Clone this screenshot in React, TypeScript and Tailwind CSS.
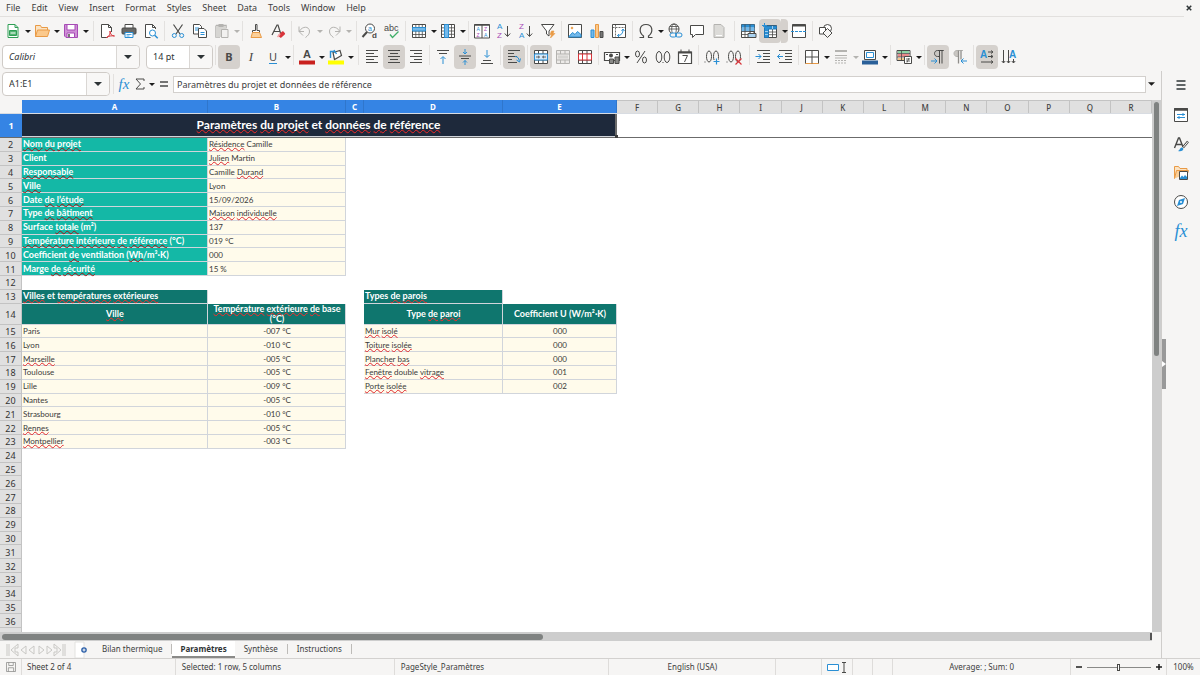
import type { ReactNode } from "react";
import clsx from "clsx";

const INK = "#4a4a48";
const BLUE = "#2a8fd4";
const GREY = "#b4b3b0";
const ORANGE = "#e99a45";
const PURPLE = "#a74bb5";
const RED = "#d8353b";
const GREEN = "#2f9e55";

const letters = (size: number) => ({ fontFamily: "Liberation Sans", fontSize: size, stroke: "none" });

const icons: Record<string, ReactNode> = {
  newSheet: (
    <>
      <path d="M3 1.5h7l3 3v10H3z" fill="#fff" stroke={GREEN} />
      <path d="M10 1.5v3h3" stroke={GREEN} />
      <path d="M4.5 7.5h7v5h-7z" fill="#56b574" stroke={GREEN} />
      <path d="M5.5 10h5" stroke="#fff" />
    </>
  ),
  open: (
    <>
      <path d="M1.5 13.5v-11h5l1 2h6v3" fill="#fbe3c3" stroke={ORANGE} />
      <path d="M1.5 13.5l2-6.5h12l-2 6.5z" fill="#fbc98c" stroke={ORANGE} />
    </>
  ),
  save: (
    <>
      <path d="M1.5 1.5h13v13h-11.5l-1.5-1.5z" fill="#cf8fd6" stroke={PURPLE} />
      <path d="M4 1.5h8v5.5h-8z" fill="#fff" stroke={PURPLE} />
      <path d="M4 10h7.5v4.5h-7.5z" fill="#fff" stroke={PURPLE} />
      <path d="M6 11v3" stroke={INK} strokeWidth="1.5" />
    </>
  ),
  pdf: (
    <>
      <path d="M12.5 9v-4.5l-3-3h-7v13h6" fill="#fff" stroke={INK} />
      <path d="M9.5 1.5v3h3" stroke={INK} />
      <path d="M7.5 14.5c3-1 4-4 3.5-6.5c0 3 2 5 4.5 5c-3-.5-6 0-8 1.5z" stroke={RED} />
    </>
  ),
  print: (
    <>
      <path d="M4 5v-3.5h8v3.5" fill="#fff" stroke={INK} />
      <rect x="1" y="5" width="14" height="6" rx="1" fill="#686866" stroke={INK} />
      <path d="M4 9.5h8v5h-8z" fill="#fff" stroke={BLUE} />
      <path d="M5.5 11.5h5M5.5 13h3" stroke={BLUE} strokeWidth=".8" />
    </>
  ),
  preview: (
    <>
      <path d="M12.5 6v-1.5l-3-3h-7v13h5" fill="#fff" stroke={INK} />
      <path d="M9.5 1.5v3h3" stroke={INK} />
      <circle cx="9.5" cy="10" r="3" fill="#fff" stroke={BLUE} />
      <path d="M11.7 12.2l3 3" stroke={BLUE} strokeWidth="1.5" />
    </>
  ),
  cut: (
    <>
      <path d="M3.5 1.5l6.5 9.5M12.5 1.5l-6.5 9.5" stroke={INK} strokeWidth="1.2" />
      <circle cx="4.3" cy="12.5" r="2" stroke={BLUE} />
      <circle cx="11.7" cy="12.5" r="2" stroke={BLUE} />
    </>
  ),
  copy: (
    <>
      <path d="M1.5 1.5h6l2 2v7.5h-8z" fill="#fff" stroke={INK} />
      <path d="M3 5h4M3 7h3" stroke={BLUE} />
      <path d="M6.5 5.5h5.5l2.5 2.5v6.5h-8z" fill="#fff" stroke={INK} />
      <path d="M8.5 9.5h4M8.5 11.5h4" stroke={BLUE} />
    </>
  ),
  paste: (
    <>
      <path d="M2 2.5h10v3M2 2.5v11.5h4" fill="none" stroke={GREY} strokeWidth="1.5" />
      <path d="M2 3h10v11h-10z" fill="#d6d5d2" />
      <path d="M4.5 1h5v3h-5z" fill={GREY} />
      <path d="M7.5 6.5h6.5v8h-6.5z" fill="#f2f1f0" stroke={GREY} />
    </>
  ),
  clone: (
    <>
      <path d="M7.5 1.5h1.5v6h2.5v2h-7v-2h3z" fill="#fff" stroke={INK} />
      <path d="M4.5 9.5l-1.5 5h10.5l-2-5z" fill="#fbd09a" stroke={ORANGE} />
    </>
  ),
  clearFormat: (
    <>
      <path d="M2 12l5-10h1l2.5 8M4 8.5h5.5" stroke={INK} strokeWidth="1.2" />
      <rect x="8.5" y="9.5" width="6.5" height="4" rx="1" transform="rotate(-42 11.7 11.5)" fill={RED} />
      <path d="M7.5 14l2.5-3" stroke="#f3a3a6" strokeWidth="1.5" />
    </>
  ),
  undo: <path d="M2 8.5l4 4M2 8.5h5M2 8.5v-5M2.5 8c3-5 9.5-5 10 0c.3 3-2 5-4 6.5" stroke={GREY} />,
  redo: <path d="M14 8.5l-4 4M14 8.5h-5M14 8.5v-5M13.5 8c-3-5-9.5-5-10 0c-.3 3 2 5 4 6.5" stroke={GREY} />,
  find: (
    <>
      <circle cx="8" cy="5.5" r="4.5" fill="#fff" stroke={INK} />
      <path d="M5 9l-4.5 5" stroke={INK} strokeWidth="2" />
      <text x="6" y="8" fill={BLUE} {...letters(7)}>a</text>
      <text x="10" y="15" fill={INK} fontWeight="600" {...letters(8)}>d</text>
    </>
  ),
  spell: (
    <>
      <text x="0" y="8" fill={INK} {...letters(9)}>abc</text>
      <path d="M6 11.5l2.5 3l6-6" stroke="#3fae68" strokeWidth="1.3" />
    </>
  ),
  rows: (
    <>
      <path d="M1.5 1.5h13v13h-13z" fill="#fff" stroke={INK} />
      <path d="M1.5 4.5h13M1.5 11.5h13M4.8 1.5v13M8 1.5v13M11.3 1.5v13M1.5 8h13" stroke={INK} strokeWidth=".8" />
      <path d="M1.5 4.5h13v3.5h-13z" fill="#74b9ea" stroke={BLUE} />
    </>
  ),
  columns: (
    <>
      <path d="M1.5 1.5h13v13h-13z" fill="#fff" stroke={INK} />
      <path d="M1.5 4.8h13M1.5 8h13M1.5 11.3h13M11.5 1.5v13" stroke={INK} strokeWidth=".8" />
      <path d="M4.5 1.5h4v13h-4z" fill="#74b9ea" stroke={BLUE} />
    </>
  ),
  sort: (
    <>
      <path d="M.5 1.5h15v13.5h-15zM8 1.5v13.5" fill="#fff" stroke={INK} />
      <path d="M.5 2h15" stroke={INK} strokeWidth="1.5" />
      <text x="2.5" y="8" fill={BLUE} {...letters(5)}>A</text>
      <text x="2.5" y="14" fill={PURPLE} {...letters(5)}>Z</text>
      <text x="10" y="8" fill={PURPLE} {...letters(5)}>Z</text>
      <text x="10" y="14" fill={BLUE} {...letters(5)}>A</text>
    </>
  ),
  sortAsc: (
    <>
      <text x="1" y="6" fill={BLUE} {...letters(8)}>A</text>
      <text x="1" y="15" fill={PURPLE} {...letters(8)}>Z</text>
      <path d="M11.5 3v10M8.8 10.5l2.7 3l2.7-3" stroke={INK} />
    </>
  ),
  sortDesc: (
    <>
      <text x="1" y="6" fill={PURPLE} {...letters(8)}>Z</text>
      <text x="1" y="15" fill={BLUE} {...letters(8)}>A</text>
      <path d="M11.5 3v10M8.8 10.5l2.7 3l2.7-3" stroke={INK} />
    </>
  ),
  filter: (
    <>
      <path d="M1.5 1.5h12.5l-5 6.5v5l-2.5-2v-3z" fill="#fff" stroke={INK} />
      <path d="M11.5 8h2.5l-1 2.5h2l-4.5 4.5l1-3.5h-1.5z" fill={ORANGE} stroke={ORANGE} strokeWidth=".6" />
    </>
  ),
  image: (
    <>
      <path d="M1.5 1.5h13v13h-13z" fill="#fff" stroke={INK} />
      <path d="M2 13.5l3.5-4l2.5 2l2.5-3l3.5 3v2.5h-12z" fill="#74b9ea" stroke={BLUE} />
      <path d="M5 3.5l1.5 1.5l-1.5 1.5l-1.5-1.5z" fill={ORANGE} />
    </>
  ),
  chart: (
    <>
      <path d="M2 7h3v7.5h-3z" fill="#74b9ea" stroke={BLUE} />
      <path d="M6.5 1.5h3v13h-3z" fill="#fbc98c" stroke={ORANGE} />
      <path d="M11 8.5h3v6h-3z" fill="#777" stroke={INK} />
    </>
  ),
  pivot: (
    <>
      <path d="M1.5 1.5h13v13h-13z" fill="#fff" stroke={INK} />
      <path d="M1.5 4.5h13M4.5 1.5v13" stroke={INK} strokeWidth=".8" strokeDasharray="2 1" />
      <path d="M6.5 12.5c4 0 5.5-2.5 5.5-6M10.5 8l1.5-2l1.5 2M8 11l-1.5 1.5l1.5 1.5" stroke={BLUE} />
    </>
  ),
  omega: (
    <path d="M1.5 14.5h4v-1.5c-5-3.5-4.5-11.5 2.5-11.5s7.5 8 2.5 11.5v1.5h4" stroke={INK} strokeWidth="1.2" />
  ),
  hyperlink: (
    <>
      <circle cx="7" cy="6" r="5" fill="#fff" stroke={INK} />
      <ellipse cx="7" cy="6" rx="2.3" ry="5" stroke={INK} strokeWidth=".8" />
      <path d="M2 6h10M3 3.5h8" stroke={INK} strokeWidth=".8" />
      <rect x="3" y="10" width="6.5" height="4" rx="2" fill="#f6f5f4" stroke={BLUE} />
      <rect x="8.5" y="10" width="6.5" height="4" rx="2" stroke={BLUE} />
    </>
  ),
  comment: <path d="M1.5 2.5h13v9h-8l-3 3v-3h-2z" fill="#fff" stroke={INK} />,
  headerFooter: (
    <>
      <path d="M3 1.5h7l3 3v10h-10z" fill="#dcdbd8" stroke={GREY} />
      <path d="M5 12.5h6" stroke="#fff" />
    </>
  ),
  printArea: (
    <>
      <path d="M1.5 1.5h13v13h-13z" fill="#fff" stroke={INK} />
      <path d="M1.5 4.5h13v4h-13z" fill="#74b9ea" />
      <path d="M1.5 1.5h13v3h-13z" fill="#2a8fd4" />
      <path d="M1.5 8.5h13M1.5 11.5h7M5 1.5v13M10 1.5v8" stroke={INK} strokeWidth=".8" />
      <path d="M8 10.5h8v4h-8z" fill="#a9d2f0" stroke={INK} />
      <path d="M10 10v-1.5h4v1.5" stroke={INK} />
    </>
  ),
  freeze: (
    <>
      <path d="M2.5 2.5h12v12h-12z" fill="#fff" stroke={INK} />
      <path d="M10.5 6v8.5M6 9h8.5M6 11.7h8.5" stroke={INK} strokeWidth=".8" />
      <path d="M1 3h13.5v3h-8v8.5h-4v-10" fill={BLUE} stroke="#1f76b5" />
      <path d="M0 2.5h5M2.5 0v5" stroke={BLUE} />
      <path d="M3 8.5h3M3 11.5h3M10.5 3v3" stroke="#bfe0f7" strokeWidth=".8" />
    </>
  ),
  split: (
    <>
      <path d="M1.5 1.5h13v13h-13z" fill="#fff" stroke={INK} />
      <path d="M1.5 2.5h13" stroke={INK} strokeWidth="2" />
      <path d="M0 8.5h16" stroke={BLUE} strokeWidth="1.2" strokeDasharray="3 1" />
    </>
  ),
  shapes: (
    <>
      <circle cx="9.5" cy="5.5" r="4" fill="#fff" stroke={INK} />
      <path d="M1.5 4.5h6v6.5h-6z" fill="#fff" stroke={INK} />
      <path d="M9.5 5.5l4.5 4.5l-4.5 4.5l-4.5-4.5z" fill="#f6f5f4" stroke={INK} />
    </>
  ),
  fontColor: (
    <>
      <text x="4" y="9" fill={INK} fontWeight="600" {...letters(11)}>A</text>
      <path d="M0 11.5h16v4h-16z" fill="#c9211e" />
    </>
  ),
  highlight: (
    <>
      <path d="M5 3.5l7-2l1.5 5l-7 4z" fill="#fff" stroke={INK} strokeWidth="1.2" />
      <path d="M2.5 9v-6.5h4M6 1l2.5 4" stroke={BLUE} strokeWidth="1.4" />
      <path d="M0 11.5h16v4h-16z" fill="#ffff00" />
    </>
  ),
  alignLeft: <path d="M2 1.5h12M2 4.5h8M2 7.5h12M2 10.5h8M2 13.5h12" stroke={INK} />,
  alignCenter: <path d="M2 1.5h12M4 4.5h8M2 7.5h12M4 10.5h8M2 13.5h12" stroke={INK} />,
  alignRight: <path d="M2 1.5h12M6 4.5h8M2 7.5h12M6 10.5h8M2 13.5h12" stroke={INK} />,
  top: (
    <>
      <path d="M2 1.5h12M4 4.5h8" stroke={INK} />
      <path d="M8 15v-7M5.5 10l2.5-2.5l2.5 2.5" stroke={BLUE} />
    </>
  ),
  middle: (
    <>
      <path d="M2 7h12M4 9.5h8" stroke={INK} />
      <path d="M8 0v5M6 3l2 2l2-2M8 16v-4.5M6 13.5l2-2l2 2" stroke={BLUE} />
    </>
  ),
  bottom: (
    <>
      <path d="M4 11.5h8M2 14.5h12" stroke={INK} />
      <path d="M8 1v7M5.5 6l2.5 2.5l2.5-2.5" stroke={BLUE} />
    </>
  ),
  wrap: (
    <>
      <path d="M2 1.5h12M2 4.5h6M2 7.5h9M2 10.5h4M2 13.5h9" stroke={INK} />
      <path d="M9 7.5c3 0 4 2 4 4M10.5 11l3 2l1-3.5" stroke={BLUE} />
    </>
  ),
  merge: (
    <>
      <path d="M1.5 1.5h13v13h-13z" fill="#fff" stroke={INK} />
      <path d="M1.5 5h13M1.5 11h13M5.5 1.5v3.5M10 1.5v3.5M5.5 11v3.5M10 11v3.5" stroke={INK} />
      <path d="M1.5 5h13v6h-13z" fill="#d6eafa" stroke={BLUE} />
      <path d="M3 8h3.5M9.5 8h3.5M5 6.8l1.5 1.2l-1.5 1.2M11 6.8l-1.5 1.2l1.5 1.2" stroke={INK} strokeWidth=".8" />
    </>
  ),
  mergeCells: (
    <>
      <path d="M1.5 1.5h13v13h-13z" fill="#eceae8" stroke={GREY} />
      <path d="M1.5 5h13M1.5 11h13M5.5 1.5v3.5M10 1.5v3.5M5.5 11v3.5M10 11v3.5" stroke={GREY} />
      <path d="M3 6.5h10v3h-10z" fill="#d6d5d2" />
    </>
  ),
  unmerge: (
    <>
      <path d="M1.5 1.5h13v13h-13z" fill="#fff" stroke={INK} />
      <path d="M1.5 5h13M1.5 11h13M5.5 1.5v3.5M10 1.5v3.5M5.5 11v3.5M10 11v3.5" stroke={INK} />
      <path d="M1.5 5h13v6h-13zM5.5 5v6M10 5v6" fill="#fff" stroke={RED} />
    </>
  ),
  currency: (
    <>
      <path d="M.5 3.5h15v8h-15z" fill="#fff" stroke={INK} strokeWidth="1.2" />
      <circle cx="7" cy="6.5" r="2" fill={INK} />
      <path d="M2 5.5h2M12 5.5h2" stroke={INK} />
      <path d="M5.5 10h4v4.5h-4zM11 8h4v6.5h-4z" fill="#8a8a88" stroke={INK} />
    </>
  ),
  percent: (
    <>
      <ellipse cx="4.5" cy="5" rx="2" ry="3" stroke={INK} />
      <ellipse cx="11.5" cy="11" rx="2" ry="3" stroke={INK} />
      <path d="M12 2l-8 12" stroke={INK} />
    </>
  ),
  number: (
    <>
      <ellipse cx="4" cy="8" rx="2.8" ry="5.5" stroke={INK} />
      <ellipse cx="12" cy="8" rx="2.8" ry="5.5" stroke={INK} />
      <path d="M7.5 13.5h1" stroke={INK} />
    </>
  ),
  date: (
    <>
      <path d="M1.5 3h13v11.5h-13z" fill="#fff" stroke={INK} strokeWidth="1.2" />
      <path d="M1.5 3.5h13" stroke={INK} strokeWidth="2" />
      <path d="M4 .5v3M12 .5v3M5.5 6.5h5l-3 6.5" stroke={INK} />
    </>
  ),
  addDecimal: (
    <>
      <path d="M.5 13h1" stroke={INK} />
      <ellipse cx="5" cy="7.5" rx="2.5" ry="5.5" stroke={INK} />
      <ellipse cx="12" cy="7.5" rx="2.5" ry="5.5" stroke={INK} />
      <path d="M9 12.5h7M12.5 9v7" stroke="#f6f5f4" strokeWidth="3" />
      <path d="M9.5 12.5h6M12.5 9.5v6" stroke={BLUE} strokeWidth="1.2" />
    </>
  ),
  removeDecimal: (
    <>
      <path d="M.5 13h1" stroke={INK} />
      <ellipse cx="5" cy="7.5" rx="2.5" ry="5.5" stroke={INK} />
      <ellipse cx="12" cy="7.5" rx="2.5" ry="5.5" stroke={INK} />
      <path d="M9.5 9.5l6 6M15.5 9.5l-6 6" stroke={RED} strokeWidth="1.2" />
    </>
  ),
  indent: (
    <>
      <path d="M2 1.5h13M8 4.5h7M8 7.5h7M8 10.5h7M2 13.5h13" stroke={INK} />
      <path d="M.5 7.5h5.5M3.5 5l2.5 2.5l-2.5 2.5" stroke={BLUE} />
    </>
  ),
  outdent: (
    <>
      <path d="M2 1.5h13M8 4.5h7M8 7.5h7M8 10.5h7M2 13.5h13" stroke={INK} />
      <path d="M.5 7.5h5.5M3 5l-2.5 2.5l2.5 2.5" stroke={BLUE} />
    </>
  ),
  borders: (
    <>
      <path d="M1.5 1.5h13v13h-13z" fill="#fff" stroke={INK} />
      <path d="M1.5 14.5h13" stroke={ORANGE} />
      <path d="M8 1.5v13M1.5 8h13" stroke={INK} />
    </>
  ),
  borderStyle: (
    <>
      <path d="M2 2h12" stroke={GREY} strokeWidth="2" />
      <path d="M2 6.5h12M2 9h12" stroke={GREY} />
      <path d="M2 11.5h12M2 14h12" stroke={GREY} strokeDasharray="2 1" />
    </>
  ),
  borderColor: (
    <>
      <path d="M2.5 1.5h11v9h-11z" fill="#fff" stroke={INK} />
      <path d="M4.5 3.5h7v5h-7z" stroke={BLUE} />
      <path d="M0 11.5h16v4h-16z" fill="#2a6099" />
    </>
  ),
  conditional: (
    <>
      <path d="M1 1.5h13v10h-13z" fill="#fff" stroke={INK} />
      <path d="M2 2h11v2h-11z" fill="#8fd3a5" />
      <path d="M2 5h11v3h-11z" fill="#e98a8c" />
      <path d="M2 9h7v2h-7z" fill="#f5c78d" />
      <path d="M5.5 1.5v10M1 4.5h13M1 8h13" stroke={INK} strokeWidth=".8" />
      <path d="M8.5 7.5h7v7h-7z" fill="#fff" stroke={INK} />
      <path d="M10 10h4M10 12h4M13 9l-2 4.5" stroke={INK} strokeWidth=".8" />
    </>
  ),
  ltr: (
    <>
      <path d="M13.5 1.5h-6c-4 0-4 6 0 6h2v-6z" fill="#c9c6c2" stroke={INK} />
      <path d="M9.5 1.5v13M12 1.5v13" stroke={INK} />
      <path d="M1 12h6M4.5 9.5l2.5 2.5l-2.5 2.5" stroke={BLUE} />
    </>
  ),
  rtl: (
    <>
      <path d="M11 1.5h-6c-4 0-4 6 0 6h1.5v-6z" fill="#c9c6c2" stroke={GREY} />
      <path d="M6.5 1.5v13M9 1.5v9" stroke="#8f8d8a" strokeWidth="1.3" />
      <path d="M15 12h-6M11.5 9.5l-2.5 2.5l2.5 2.5" stroke={BLUE} />
    </>
  ),
  textHorizontal: (
    <>
      <text x="1" y="9" fill={BLUE} fontWeight="600" {...letters(10)}>A</text>
      <path d="M9 3h5M9 7.5h5M2 13h12M12 1.5l2 1.5l-2 1.5M12 6l2 1.5l-2 1.5M12 11.5l2 1.5l-2 1.5" stroke={INK} />
    </>
  ),
  textVertical: (
    <>
      <text x="8" y="9" fill={BLUE} fontWeight="600" {...letters(10)}>A</text>
      <path d="M2.5 1v13M7.5 1v13M12.5 10v4M.8 12l1.7 2l1.7-2M5.8 12l1.7 2l1.7-2M10.8 12l1.7 2l1.7-2" stroke={INK} />
    </>
  ),
  properties: (
    <>
      <path d="M1.5 1.5h13v13h-13z" fill="#fff" stroke={INK} />
      <path d="M1 2.5h14" stroke={INK} strokeWidth="2.5" />
      <path d="M4 7.5h8M4 10.5h8M10 6v3M6 9v3" stroke={BLUE} />
    </>
  ),
  styles: (
    <>
      <path d="M1.5 12l4-10h1l3.5 9M3 8.5h6" stroke={INK} strokeWidth="1.4" />
      <path d="M15 5.5l-5 6" stroke={INK} strokeWidth="2.5" />
      <path d="M14.8 5.8l-4.5 5.5" stroke="#fff" />
      <path d="M5 15c2-.5 1.5-3 3.5-3.5c2 0 2.5 2 1 3c-1 .8-3 .8-4.5.5z" fill={BLUE} />
    </>
  ),
  gallery: (
    <>
      <path d="M1.5 13.5v-12h4l1.5 2h7v2" fill="#fbe3c3" stroke={ORANGE} />
      <path d="M1.5 13.5l2-8h12l-1 3" fill="#fbd09a" stroke={ORANGE} />
      <path d="M6.5 6.5h8v8h-8z" fill="#fff" stroke={INK} />
      <path d="M7 13l2-2.5l1.5 1.5l1.5-2l2 2v2h-7z" fill={BLUE} />
    </>
  ),
  navigator: (
    <>
      <circle cx="8" cy="8" r="6.5" fill="#fff" stroke={INK} />
      <path d="M12 4l-2 6l-6 2l2-6z" fill={BLUE} />
      <circle cx="8" cy="8" r="1" fill="#fff" />
    </>
  ),
  saveState: (
    <path d="M2 2h12v12h-12zM5 2v4h6v-4M4.5 14v-5h7v5" stroke="#8a8a88" />
  ),
  addSheet: (
    <>
      <path d="M1 0h9v16h-9z" fill="#fff" stroke="#e3e2e0" />
      <circle cx="10" cy="8" r="2.8" fill="#2b5fa8" />
      <path d="M8.5 8h3M10 6.5v3" stroke="#fff" />
    </>
  ),
};

function Icon({ name, className = "h-4 w-4" }: { name: string; className?: string }) {
  return (
    <svg viewBox="0 0 16 16" fill="none" className={clsx("shrink-0 overflow-visible", className)} aria-hidden="true">
      {icons[name]}
    </svg>
  );
}

function Triangle({ className }: { className?: string }) {
  return (
    <svg viewBox="0 0 8 4" className={clsx("shrink-0", className)} aria-hidden="true">
      <path d="M0 0h8L4 4z" fill="currentColor" />
    </svg>
  );
}

function Tool({ name, label, active, children }: { name?: string; label: string; active?: boolean; children?: ReactNode }) {
  return (
    <button
      type="button"
      aria-label={label}
      className={clsx("flex h-6 w-[22px] shrink-0 items-center justify-center rounded", active && "bg-[#d5d1cd]")}
    >
      {name ? <Icon name={name} /> : children}
    </button>
  );
}

function Caret({ label, disabled, active }: { label: string; disabled?: boolean; active?: boolean }) {
  return (
    <button
      type="button"
      aria-label={label}
      className={clsx(
        "flex h-6 w-[7px] shrink-0 items-center justify-center rounded-r",
        disabled ? "text-[#b4b3b0]" : "text-[#1c1c1c]",
        active && "bg-[#d5d1cd]",
      )}
    >
      <Triangle className="h-[3px] w-[6px]" />
    </button>
  );
}

function Sep({ wide }: { wide?: boolean }) {
  return <span className={clsx("h-5 w-[3px] shrink-0 border-l border-[#e3e1df]", wide ? "ml-1" : "ml-0.5")} />;
}

function Combo({ label, value, className, italic }: { label: string; value: string; className: string; italic?: boolean }) {
  return (
    <div className={clsx("relative h-6 shrink-0 rounded border border-[#cfcbc7] bg-white", className)}>
      <select
        aria-label={label}
        className={clsx(
          "block h-[22px] w-full appearance-none bg-transparent pl-1.5 text-[9px] leading-[22px] text-[#2e3436] outline-none",
          italic && "italic",
        )}
      >
        <option>{value}</option>
      </select>
      <span className="pointer-events-none absolute inset-y-0 right-0 flex w-[23px] items-center justify-center rounded-r border-l border-[#dad7d4] bg-[#f8f7f6] text-[#2e3436]">
        <Triangle className="h-1 w-2" />
      </span>
    </div>
  );
}

const menus = ["File", "Edit", "View", "Insert", "Format", "Styles", "Sheet", "Data", "Tools", "Window", "Help"];

function MenuBar() {
  return (
    <nav className="mr-4 flex h-[17px] shrink-0 items-center gap-px border-b border-[#e2e0de] pl-px text-[9px] text-[#3d3d3d]">
      {menus.map((menu) => (
        <button key={menu} type="button" className="px-[5px] leading-4">
          {menu}
        </button>
      ))}
      <button type="button" aria-label="Close document" className="-mr-2 ml-auto text-[#2e3436]">
        <svg viewBox="0 0 8 8" className="h-[6px] w-[6px]">
          <path d="M1 1l6 6M7 1l-6 6" stroke="currentColor" strokeWidth="2" />
        </svg>
      </button>
    </nav>
  );
}

function StandardBar() {
  return (
    <div className="flex h-7 shrink-0 items-center pl-0.5">
      <Tool name="newSheet" label="New" />
      <Caret label="New options" />
      <Tool name="open" label="Open" />
      <Caret label="Open options" />
      <Tool name="save" label="Save" />
      <Caret label="Save options" />
      <Sep wide />
      <Tool name="pdf" label="Export as PDF" />
      <Tool name="print" label="Print" />
      <Tool name="preview" label="Print preview" />
      <Sep />
      <Tool name="cut" label="Cut" />
      <Tool name="copy" label="Copy" />
      <Tool name="paste" label="Paste" />
      <Caret label="Paste options" disabled />
      <Sep />
      <Tool name="clone" label="Clone formatting" />
      <Tool name="clearFormat" label="Clear formatting" />
      <Sep />
      <Tool name="undo" label="Undo" />
      <Caret label="Undo options" disabled />
      <Tool name="redo" label="Redo" />
      <Caret label="Redo options" disabled />
      <Sep wide />
      <Tool name="find" label="Find and replace" />
      <Tool name="spell" label="Spelling" />
      <Sep />
      <Tool name="rows" label="Row" />
      <Caret label="Row options" />
      <Tool name="columns" label="Column" />
      <Caret label="Column options" />
      <Sep />
      <Tool name="sort" label="Sort" />
      <Tool name="sortAsc" label="Sort ascending" />
      <Tool name="sortDesc" label="Sort descending" />
      <Tool name="filter" label="AutoFilter" />
      <Sep />
      <Tool name="image" label="Insert image" />
      <Tool name="chart" label="Insert chart" />
      <Tool name="pivot" label="Insert pivot table" />
      <Sep />
      <Tool name="omega" label="Special character" />
      <Caret label="Special character options" />
      <Tool name="hyperlink" label="Hyperlink" />
      <Tool name="comment" label="Comment" />
      <Tool name="headerFooter" label="Headers and footers" />
      <Sep wide />
      <Tool name="printArea" label="Define print area" />
      <Tool name="freeze" label="Freeze rows and columns" active />
      <Caret label="Freeze options" active />
      <Tool name="split" label="Split window" />
      <Sep />
      <Tool name="shapes" label="Show draw functions" />
    </div>
  );
}

function FormattingBar() {
  return (
    <div className="flex h-[26px] shrink-0 items-start pl-0.5">
      <Combo label="Font name" value="Calibri" className="w-[138px]" italic />
      <Combo label="Font size" value="14 pt" className="ml-1.5 w-[67px]" />
      <Sep />
      <Tool label="Bold" active>
        <span className="text-[11px] font-bold text-[#4a4a48]">B</span>
      </Tool>
      <Tool label="Italic">
        <span className="font-['Liberation_Serif'] text-[13px] italic text-[#4a4a48]">I</span>
      </Tool>
      <Tool label="Underline">
        <span className="border-b border-[#2a8fd4] text-[11px] leading-3 text-[#4a4a48]">U</span>
      </Tool>
      <Caret label="Underline options" />
      <Sep />
      <Tool name="fontColor" label="Font color" />
      <Caret label="Font color options" />
      <Tool name="highlight" label="Background color" />
      <Caret label="Background color options" />
      <Sep wide />
      <Tool name="alignLeft" label="Align left" />
      <Tool name="alignCenter" label="Center horizontally" active />
      <Tool name="alignRight" label="Align right" />
      <Sep />
      <Tool name="top" label="Align top" />
      <Tool name="middle" label="Center vertically" active />
      <Tool name="bottom" label="Align bottom" />
      <Sep />
      <Tool name="wrap" label="Wrap text" active />
      <Sep />
      <Tool name="merge" label="Merge and center" active />
      <Tool name="mergeCells" label="Merge cells" />
      <Tool name="unmerge" label="Unmerge cells" />
      <Sep />
      <Tool name="currency" label="Format as currency" />
      <Caret label="Currency options" />
      <Tool name="percent" label="Format as percent" />
      <Tool name="number" label="Format as number" />
      <Tool name="date" label="Format as date" />
      <Sep />
      <Tool name="addDecimal" label="Add decimal place" />
      <Tool name="removeDecimal" label="Delete decimal place" />
      <Sep wide />
      <Tool name="indent" label="Increase indent" />
      <Tool name="outdent" label="Decrease indent" />
      <Sep />
      <Tool name="borders" label="Borders" />
      <Caret label="Borders options" />
      <Tool name="borderStyle" label="Border style" />
      <Caret label="Border style options" disabled />
      <Tool name="borderColor" label="Border color" />
      <Caret label="Border color options" />
      <Sep />
      <Tool name="conditional" label="Conditional formatting" />
      <Caret label="Conditional formatting options" />
      <Sep />
      <Tool name="ltr" label="Left-to-right" active />
      <Tool name="rtl" label="Right-to-left" />
      <Sep />
      <Tool name="textHorizontal" label="Text direction from left to right" active />
      <Tool name="textVertical" label="Text direction from top to bottom" />
    </div>
  );
}

function FormulaBar() {
  return (
    <div className="flex h-[29px] shrink-0 items-start pl-0.5 pt-px">
      <Combo label="Name box" value="A1:E1" className="w-[108px]" />
      <div className="ml-px flex h-6 flex-1 items-center">
        <Sep />
        <button type="button" aria-label="Function wizard" className="w-4 font-['Liberation_Serif'] text-[15px] italic leading-5 text-[#2a8fd4]">
          fx
        </button>
        <button type="button" aria-label="Select function" className="flex w-4 justify-center">
          <svg viewBox="0 0 10 12" className="h-3 w-[10px]" fill="none">
            <path d="M9 3v-2h-8l4.5 5l-4.5 5h8v-2" stroke={INK} />
          </svg>
        </button>
        <Caret label="Function options" />
        <button type="button" aria-label="Formula" className="flex w-[18px] justify-center">
          <svg viewBox="0 0 8 8" className="h-2 w-2" fill="none">
            <path d="M0 2h8M0 6h8" stroke={INK} strokeWidth="1.5" />
          </svg>
        </button>
        <input
          aria-label="Formula input"
          defaultValue="Paramètres du projet et données de référence"
          className="h-[17px] min-w-0 flex-1 border border-[#d3d0cd] bg-white px-[3px] text-[9px] text-[#3d3d3d] outline-none"
        />
        <button type="button" aria-label="Expand formula bar" className="flex w-[15px] justify-center pr-1 text-[#1c1c1c]">
          <Triangle className="h-1 w-[7px]" />
        </button>
      </div>
    </div>
  );
}

type ColumnKey = "A" | "B" | "C" | "D" | "E";

const columnWidths: Record<ColumnKey, string> = {
  A: "w-[186px]",
  B: "w-[138px]",
  C: "w-[18px]",
  D: "w-[139px]",
  E: "w-[114px]",
};
const dataColumns: ColumnKey[] = ["A", "B", "C", "D", "E"];
const emptyColumns = ["F", "G", "H", "I", "J", "K", "L", "M", "N", "O", "P", "Q", "R"];

type Tone = "label" | "head" | "headCenter" | "value" | "valueCenter";

interface CellData {
  text: string;
  tone: Tone;
}

const tones: Record<Tone, string> = {
  label: "bg-[#14b8a6] text-[9px] font-bold text-white [&_span]:decoration-[#a80f0f]",
  head: "bg-[#0f766e] text-[9px] font-bold text-white [&_span]:decoration-[#ff2a2a]",
  headCenter: "bg-[#0f766e] justify-center text-center text-[9px] font-bold text-white [&_span]:decoration-[#ff2a2a]",
  value: "bg-[#fffbeb] text-[8px] text-[#3a3a3a]",
  valueCenter: "bg-[#fffbeb] justify-center text-[8px] text-[#3a3a3a]",
};

// words between tildes carry the spell checker's wavy line
const projectRows = [
  ["~Nom~ ~du~ ~projet~", "~Résidence~ Camille"],
  ["Client", "~Julien~ Martin"],
  ["~Responsable~", "Camille ~Durand~"],
  ["~Ville~", "Lyon"],
  ["Date ~de~ ~l’étude~", "15/09/2026"],
  ["Type ~de~ ~bâtiment~", "~Maison~ ~individuelle~"],
  ["Surface ~totale~ (m²)", "137"],
  ["~Température~ ~intérieure~ ~de~ ~référence~ (°C)", "019 °C"],
  ["Coefficient ~de~ ventilation (~Wh~/m³·K)", "000"],
  ["Marge ~de~ ~sécurité~", "15 %"],
];

const cities = [
  ["Paris", "-007 °C"],
  ["Lyon", "-010 °C"],
  ["~Marseille~", "-005 °C"],
  ["Toulouse", "-005 °C"],
  ["Lille", "-009 °C"],
  ["Nantes", "-005 °C"],
  ["Strasbourg", "-010 °C"],
  ["~Rennes~", "-005 °C"],
  ["~Montpellier~", "-003 °C"],
];

const walls = [
  ["~Mur~ ~isolé~", "000"],
  ["~Toiture~ ~isolée~", "000"],
  ["~Plancher~ ~bas~", "000"],
  ["~Fenêtre~ double ~vitrage~", "001"],
  ["~Porte~ ~isolée~", "002"],
];

const sheet: Record<number, Partial<Record<ColumnKey, CellData>>> = {
  13: {
    A: { text: "~Villes~ et ~températures~ ~extérieures~", tone: "head" },
    D: { text: "Types ~de~ ~parois~", tone: "head" },
  },
  14: {
    A: { text: "~Ville~", tone: "headCenter" },
    B: { text: "~Température~ ~extérieure~ ~de~ base (°C)", tone: "headCenter" },
    D: { text: "Type ~de~ ~paroi~", tone: "headCenter" },
    E: { text: "Coefficient U (W/m²·K)", tone: "headCenter" },
  },
};
projectRows.forEach(([label, value], i) => {
  sheet[i + 2] = { A: { text: label, tone: "label" }, B: { text: value, tone: "value" } };
});
cities.forEach(([city, temperature], i) => {
  sheet[i + 15] = { A: { text: city, tone: "value" }, B: { text: temperature, tone: "valueCenter" } };
});
walls.forEach(([wall, coefficient], i) => {
  sheet[i + 15].D = { text: wall, tone: "value" };
  sheet[i + 15].E = { text: coefficient, tone: "valueCenter" };
});

const rowNumbers = Array.from({ length: 35 }, (_, i) => i + 2);

function Spelled({ text }: { text: string }) {
  return (
    <span>
      {text.split("~").map((part, i) =>
        i % 2 ? (
          <span
            key={i}
            className="underline decoration-[#e0282e] decoration-wavy decoration-1 underline-offset-0 [text-decoration-skip-ink:none]"
          >
            {part}
          </span>
        ) : (
          part
        ),
      )}
    </span>
  );
}

function Cell({ column, data }: { column: ColumnKey; data?: CellData }) {
  return (
    <td
      className={clsx(
        "flex shrink-0 items-center",
        columnWidths[column],
        data && "border-b border-r border-[#d1d5db] pl-px",
        data && tones[data.tone],
      )}
    >
      {data && <Spelled text={data.text} />}
    </td>
  );
}

function Grid() {
  return (
    <table className="flex min-w-0 flex-1 flex-col overflow-hidden bg-white font-['Lato',sans-serif]">
      <thead className="block shrink-0 font-['Noto_Sans',sans-serif] text-[8px]">
        <tr className="flex h-[14px] border-b border-[#d8dce2] leading-[14px]">
          <td className="w-[22px] shrink-0 bg-[#f6f5f4]" />
          {dataColumns.map((column) => (
            <th key={column} className={clsx("shrink-0 border-r border-[#2f76cc] bg-[#3584e4] font-bold text-white", columnWidths[column])}>
              {column}
            </th>
          ))}
          {emptyColumns.map((column) => (
            <th key={column} className="min-w-0 flex-1 border-r border-t border-[#c3c3c3] bg-[#e0e0e0] font-medium leading-[13px] text-[#444]">
              {column}
            </th>
          ))}
        </tr>
      </thead>
      <tbody className="flex min-h-0 flex-1 flex-col">
        <tr className="flex h-6 shrink-0 border-b border-[#6b6b6b]">
          <th className="w-[22px] shrink-0 bg-[#3584e4] font-['Noto_Sans',sans-serif] text-[9px] font-bold leading-[23px] text-white">1</th>
          <td className="relative flex w-[595px] shrink-0 items-center justify-center border-b border-r-2 border-r-[#6b6b6b] border-b-[#d1d5db] bg-[#1e293b] text-xs font-bold text-white [&_span]:decoration-[#f02a2a]">
            <Spelled text="~Paramètres~ ~du~ ~projet~ et ~données~ ~de~ ~référence~" />
            <span className="absolute -bottom-0.5 -right-[3px] h-[3px] w-[3px] bg-[#3d3d3d]" />
          </td>
        </tr>
        {rowNumbers.map((row) => (
          <tr key={row} className={clsx("flex min-h-0 leading-[10px]", row === 14 ? "h-[21px] shrink-0" : "flex-1")}>
            <th className="flex w-[22px] shrink-0 items-center justify-center border-b border-r border-[#c3c3c3] bg-[#e0e0e0] pt-0.5 font-['Noto_Sans',sans-serif] text-[9px] font-normal text-[#333]">
              {row}
            </th>
            {dataColumns.map((column) => (
              <Cell key={column} column={column} data={sheet[row]?.[column]} />
            ))}
          </tr>
        ))}
        <tr className="flex h-1 shrink-0">
          <th className="w-[22px] border-r border-[#c3c3c3] bg-[#e0e0e0]" />
        </tr>
      </tbody>
    </table>
  );
}

const tabs = ["Bilan thermique", "Paramètres", "Synthèse", "Instructions"];

function SheetTabs() {
  return (
    <div className="flex h-[17px] shrink-0 items-stretch text-[8px] text-[#3d3d3d]">
      <svg viewBox="0 0 62 14" className="ml-[5px] mt-0.5 h-[14px] w-[62px]" fill="none" stroke="#c9c8c5">
        <path d="M2 1v12M4 1v12M13 1l-7 6l7 6v-4h-3v-4h3zM21 3l-5 4l5 4zM29 3l-5 4l5 4zM34 3l5 4l-5 4zM42 3l5 4l-5 4zM49 1l7 6l-7 6v-4h3v-4h-3zM58 1v12M60 1v12" />
      </svg>
      <button type="button" aria-label="Add sheet" className="ml-1.5 mr-0.5 flex w-[18px] items-center justify-center">
        <Icon name="addSheet" />
      </button>
      {tabs.map((tab) => {
        const current = tab === "Paramètres";
        return (
          <button
            key={tab}
            type="button"
            className={clsx("flex items-center border-b-2", current ? "border-[#8a8a88] bg-white font-bold text-[#2e3436]" : "border-transparent")}
          >
            <span className={clsx("leading-[10px]", current ? "px-2" : "border-r border-[#bdbbb8] px-[9px]")}>{tab}</span>
          </button>
        );
      })}
    </div>
  );
}

function Sidebar() {
  return (
    <aside className="relative flex w-[39px] shrink-0 flex-col items-center gap-[13px] border-l border-[#cfcdcb] pt-[6px]">
      <button type="button" aria-label="Sidebar settings" className="pb-px">
        <svg viewBox="0 0 16 16" className="h-4 w-4">
          <path d="M3.5 4h9M3.5 8h9M3.5 12h9" stroke="#2e3436" strokeWidth="1.4" />
        </svg>
      </button>
      {["properties", "styles", "gallery", "navigator"].map((name) => (
        <button key={name} type="button" aria-label={name}>
          <Icon name={name} />
        </button>
      ))}
      <button type="button" aria-label="functions" className="font-['Liberation_Serif'] text-lg italic leading-4 text-[#2a8fd4]">
        fx
      </button>
      <button type="button" aria-label="Hide sidebar" className="absolute left-0 top-[268px] flex h-[50px] w-1 items-center bg-[#999]">
        <svg viewBox="0 0 4 6" className="h-[6px] w-1">
          <path d="M0 0l4 3l-4 3z" fill="#fff" />
        </svg>
      </button>
    </aside>
  );
}

function StatusBar() {
  const field = "flex items-center border-r border-[#dedcda]";
  return (
    <footer className="flex h-[17px] shrink-0 items-stretch border-t border-[#d3d1cf] text-[8px] text-[#3d3d3d]">
      <div className={clsx(field, "w-[22px] shrink-0 justify-center")}>
        <Icon name="saveState" className="h-3 w-3" />
      </div>
      <div className={clsx(field, "flex-[148] pl-[5px]")}>Sheet 2 of 4</div>
      <div className={clsx(field, "flex-[212] pl-[6px]")}>Selected: 1 row, 5 columns</div>
      <div className={clsx(field, "flex-[208] pl-[6px]")}>PageStyle_Paramètres</div>
      <div className={clsx(field, "flex-[166] justify-center")}>English (USA)</div>
      <div className={clsx(field, "flex-[45]")} />
      <div className={clsx(field, "w-[31px] shrink-0 justify-center")}>
        <svg viewBox="0 0 20 12" className="h-3 w-5" fill="none">
          <path d="M.5 3.5h11v6h-11z" fill="#fff" stroke={BLUE} />
          <path d="M15 1.5h4M17 1.5v10M15 11.5h4" stroke={INK} />
        </svg>
      </div>
      <div className={clsx(field, "w-5 shrink-0")} />
      <div className={clsx(field, "w-5 shrink-0")} />
      <div className={clsx(field, "flex-[177] justify-center")}>Average: ; Sum: 0</div>
      <div className={clsx(field, "w-24 shrink-0 justify-center gap-1")}>
        <button type="button" aria-label="Zoom out">
          <svg viewBox="0 0 8 8" className="h-2 w-2">
            <path d="M1 4h6" stroke="#1c1c1c" strokeWidth="1.5" />
          </svg>
        </button>
        <input
          type="range"
          aria-label="Zoom"
          className="h-2 w-16 appearance-none bg-transparent [&::-webkit-slider-runnable-track]:h-px [&::-webkit-slider-runnable-track]:bg-[#8a8a88] [&::-webkit-slider-thumb]:-mt-[3px] [&::-webkit-slider-thumb]:h-[7px] [&::-webkit-slider-thumb]:w-[3px] [&::-webkit-slider-thumb]:appearance-none [&::-webkit-slider-thumb]:border [&::-webkit-slider-thumb]:border-[#4a4a48] [&::-webkit-slider-thumb]:bg-white"
        />
        <button type="button" aria-label="Zoom in">
          <svg viewBox="0 0 8 8" className="h-2 w-2">
            <path d="M1 4h6M4 1v6" stroke="#1c1c1c" strokeWidth="1.5" />
          </svg>
        </button>
      </div>
      <div className="flex w-[33px] shrink-0 items-center justify-center">100%</div>
    </footer>
  );
}

export default function App() {
  return (
    <div className="flex h-screen flex-col overflow-hidden bg-[#f6f5f4] font-['Noto_Sans',sans-serif]">
      <MenuBar />
      <StandardBar />
      <FormattingBar />
      <div className="flex min-h-0 flex-1">
        <main className="flex min-w-0 flex-1 flex-col">
          <FormulaBar />
          <div className="flex min-h-0 flex-1">
            <Grid />
            <div className="w-[9px] shrink-0 bg-[#cdcdcd] px-0.5 pt-0.5">
              <div className="h-[48%] rounded-full bg-[#7f8281]" />
            </div>
          </div>
          <div className="mr-[9px] flex h-[9px] shrink-0 items-center justify-between bg-[#cdcdcd] pl-0.5">
            <div className="h-[6px] w-[47%] rounded-full bg-[#7f8281]" />
            <div className="h-[7px] w-0.5 bg-[#555]" />
          </div>
          <SheetTabs />
        </main>
        <Sidebar />
      </div>
      <StatusBar />
    </div>
  );
}
